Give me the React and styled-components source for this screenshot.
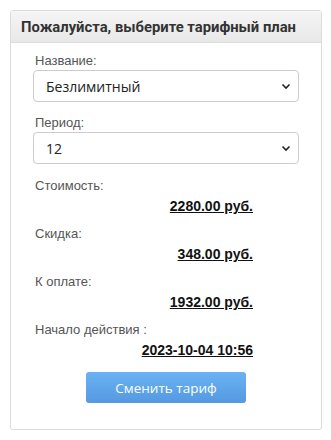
import styled, { createGlobalStyle } from 'styled-components'

const GlobalStyle = createGlobalStyle`
  html, body {
    margin: 0;
    padding: 0;
    background: #fff;
  }
`

const Page = styled.div`
  padding: 10px;
  width: 331px;
  box-sizing: border-box;
`

const Panel = styled.div`
  width: 312px;
  box-sizing: border-box;
  border: 1px solid #dcdcdc;
  border-radius: 3px;
  background: #fff;
  padding-bottom: 26px;
`

const Header = styled.div`
  height: 32px;
  box-sizing: border-box;
  padding: 0 10px;
  display: flex;
  align-items: center;
  white-space: nowrap;
  background: linear-gradient(to bottom, #f5f5f5, #e8e8e8);
  border-bottom: 1px solid #dcdcdc;
  font-family: Roboto, 'Liberation Sans', sans-serif;
  font-weight: bold;
  font-size: 14.8px;
  color: #333;
`

const Body = styled.div`
  padding: 9px 22px 0 22px;
`

const Field = styled.div`
  margin-bottom: ${(props) => props.$gap ?? 10}px;
`

const Label = styled.div`
  font-family: 'Liberation Sans', Arial, sans-serif;
  font-size: 13px;
  line-height: 18px;
  color: #555;
  padding-left: 2px;
  margin-bottom: ${(props) => props.$gap ?? 0}px;
`

const SelectBox = styled.div`
  height: 32px;
  box-sizing: border-box;
  border: 1px solid #ccc;
  border-radius: 4px;
  display: flex;
  align-items: center;
  justify-content: space-between;
  padding: 0 6px 0 12px;
  font-family: 'Open Sans', 'Noto Sans', sans-serif;
  font-size: 14px;
  color: #222;
`

const Value = styled.div`
  font-family: 'Liberation Sans', Arial, sans-serif;
  font-size: 14px;
  font-weight: bold;
  line-height: 20px;
  text-align: right;
  padding-right: 46px;
  color: #111;
  text-decoration: underline;
`

const ButtonRow = styled.div`
  display: flex;
  justify-content: center;
  margin-top: 12px;
`

const Button = styled.button`
  width: 160px;
  height: 31px;
  border: none;
  border-radius: 3px;
  background: linear-gradient(to bottom, #6ab2f4, #5599e0);
  color: #fff;
  font-family: 'Open Sans', 'Noto Sans', sans-serif;
  font-size: 13.5px;
  cursor: pointer;
`

const Chevron = () => (
  <svg width='12' height='12' viewBox='0 0 12 12'>
    <path d='M2.5 4.5 L6 8 L9.5 4.5' fill='none' stroke='#222' strokeWidth='1.6' />
  </svg>
)

const Select = ({ value }) => (
  <SelectBox>
    <span>{value}</span>
    <Chevron />
  </SelectBox>
)

const App = () => {
  return (
    <Page>
      <GlobalStyle />
      <Panel>
        <Header>Пожалуйста, выберите тарифный план</Header>
        <Body>
          <Field $gap={12}>
            <Label>Название:</Label>
            <Select value='Безлимитный' />
          </Field>
          <Field $gap={13}>
            <Label>Период:</Label>
            <Select value='12' />
          </Field>
          <Field $gap={9}>
            <Label $gap={1}>Стоимость:</Label>
            <Value>2280.00 руб.</Value>
          </Field>
          <Field $gap={9}>
            <Label $gap={1}>Скидка:</Label>
            <Value>348.00 руб.</Value>
          </Field>
          <Field $gap={9}>
            <Label $gap={1}>К оплате:</Label>
            <Value>1932.00 руб.</Value>
          </Field>
          <Field $gap={0}>
            <Label $gap={1}>Начало действия :</Label>
            <Value>2023-10-04 10:56</Value>
          </Field>
          <ButtonRow>
            <Button>Сменить тариф</Button>
          </ButtonRow>
        </Body>
      </Panel>
    </Page>
  )
}

export default App
